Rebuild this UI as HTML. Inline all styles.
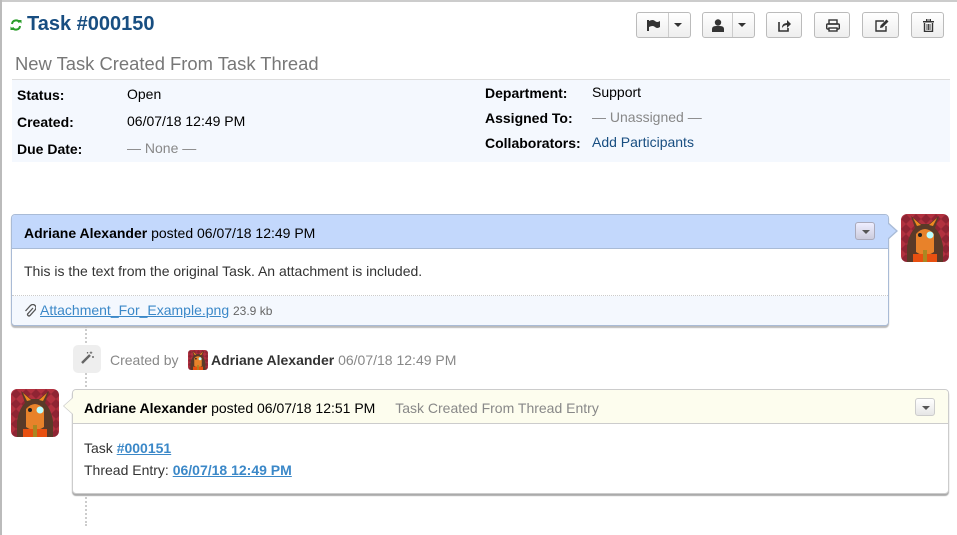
<!DOCTYPE html>
<html><head><meta charset="utf-8"><style>
*{box-sizing:border-box;margin:0;padding:0}
body{width:957px;height:535px;overflow:hidden;background:#fff;font-family:"Liberation Sans",Arial,sans-serif;font-size:14px;color:#000;position:relative}
.a{position:absolute}
.lbl{font-weight:bold;font-size:14px}
.btn{position:absolute;top:12px;height:26px;border:1px solid #bbb;border-radius:3px;background:linear-gradient(#fff,#eee);}
.btn svg{position:absolute}
.av{position:absolute;width:48px;height:48px;border-radius:6px;overflow:hidden}
.dd{position:absolute;width:20px;height:18px;border:1px solid #aab;border-radius:3px;background:linear-gradient(#eef,#ccd)}
.dd:after{content:"";position:absolute;left:6px;top:7px;border-left:4px solid transparent;border-right:4px solid transparent;border-top:4px solid #555}
a{color:#3b88c8;text-decoration:underline}
</style></head><body>
<div class="a" style="left:0;top:0;width:957px;height:2px;background:#ccc"></div>
<div class="a" style="left:0;top:0;width:2px;height:535px;background:#bbb"></div>

<svg class="a" style="left:10px;top:19px" width="12" height="12" viewBox="0 0 12 12"><path d="M2 5A4 4 0 0 1 9.5 3.5" stroke="#2a9d2a" stroke-width="2" fill="none"/><path d="M8 1h3.5v3.5z" fill="#2a9d2a"/><path d="M10 7A4 4 0 0 1 2.5 8.5" stroke="#2a9d2a" stroke-width="2" fill="none"/><path d="M4 11H.5V7.5z" fill="#2a9d2a"/></svg>
<div class="a" style="left:27px;top:13px;font-size:20px;font-weight:bold;color:#184e81">Task #000150</div>
<div class="a" style="left:15px;top:53px;font-size:18.4px;color:#777">New Task Created From Task Thread</div>

<div class="btn" style="left:636px;width:55px"><svg style="left:10px;top:7px" width="14" height="11"><rect x="0" y="0" width="2" height="11" fill="#333"/><path d="M2 1Q6 -1 8 1T13 1V7Q10 9 8 7T2 7Z" fill="#333"/></svg><div class="a" style="left:31px;top:0;width:1px;height:24px;background:#ccc"></div><div class="a" style="left:37px;top:10px;border-left:4px solid transparent;border-right:4px solid transparent;border-top:4px solid #333"></div></div>
<div class="btn" style="left:702px;width:53px"><svg style="left:9px;top:6px" width="12" height="13"><circle cx="6" cy="3.5" r="3.2" fill="#333"/><path d="M0 13V10Q0 7 4 7H8Q12 7 12 10V13Z" fill="#333"/></svg><div class="a" style="left:29px;top:0;width:1px;height:24px;background:#ccc"></div><div class="a" style="left:35px;top:10px;border-left:4px solid transparent;border-right:4px solid transparent;border-top:4px solid #333"></div></div>
<div class="btn" style="left:766px;width:36px"><svg style="left:11px;top:6px" width="14" height="13"><path d="M1 3V12H10V9" stroke="#333" stroke-width="1.6" fill="none"/><path d="M4 9Q4 4 9 4V1L13 5L9 9V6Q6 6 4 9Z" fill="#333"/></svg></div>
<div class="btn" style="left:814px;width:36px"><svg style="left:11px;top:6px" width="14" height="13"><rect x="3" y="1" width="8" height="4" fill="none" stroke="#333" stroke-width="1.4"/><rect x="0.7" y="5" width="12.6" height="5" rx="1" fill="none" stroke="#333" stroke-width="1.4"/><rect x="3" y="9" width="8" height="3" fill="#fff" stroke="#333" stroke-width="1.4"/></svg></div>
<div class="btn" style="left:862px;width:37px"><svg style="left:12px;top:6px" width="14" height="13"><path d="M9 2H1V12H11V7" stroke="#333" stroke-width="1.4" fill="none"/><path d="M5 9L5.5 6.5L11.5 0.5L13.5 2.5L7.5 8.5Z" fill="#333"/></svg></div>
<div class="btn" style="left:911px;width:33px"><svg style="left:11px;top:6px" width="11" height="13"><rect x="0" y="2" width="11" height="1.5" fill="#333"/><rect x="3.5" y="0" width="4" height="2" fill="none" stroke="#333"/><path d="M1.5 4V12.5H9.5V4" stroke="#333" stroke-width="1.4" fill="none"/><path d="M4 5V11M5.5 5V11M7 5V11" stroke="#333" stroke-width=".9"/></svg></div>

<div class="a" style="left:12px;top:79px;width:938px;height:83px;background:#f4f8fe;border-top:1px solid #ddd"></div>
<div class="a lbl" style="left:17px;top:87px">Status:</div><div class="a" style="left:127px;top:86px">Open</div>
<div class="a lbl" style="left:17px;top:114px">Created:</div><div class="a" style="left:127px;top:113px">06/07/18 12:49 PM</div>
<div class="a lbl" style="left:17px;top:141px">Due Date:</div><div class="a" style="left:127px;top:140px;color:#888">— None —</div>
<div class="a lbl" style="left:485px;top:85px">Department:</div><div class="a" style="left:592px;top:84px">Support</div>
<div class="a lbl" style="left:485px;top:110px">Assigned To:</div><div class="a" style="left:592px;top:109px;color:#888">— Unassigned —</div>
<div class="a lbl" style="left:485px;top:135px">Collaborators:</div><div class="a" style="left:592px;top:134px;color:#184e81">Add Participants</div>

<div class="a" style="left:85px;top:326px;width:0;height:200px;border-left:2px dotted #ccc"></div>

<div class="a" style="left:11px;top:214px;width:878px;height:112px;border:1px solid #a9bbd6;border-radius:4px;box-shadow:0 2px 1px #bbb;background:#fff;overflow:hidden">
 <div style="height:34px;background:#c3d8fc;border-bottom:1px solid #a9bbd6;padding:10px 0 0 12px"><b>Adriane Alexander</b> posted 06/07/18 12:49 PM</div>
 <div style="padding:14px 0 0 12px;height:47px;border-bottom:1px dotted #ccc;color:#333">This is the text from the original Task. An attachment is included.</div>
 <div style="height:30px;background:#f4f8fe;padding:6px 0 0 12px;font-size:14px;position:relative"><svg style="position:absolute;left:12px;top:8px" width="12" height="13" viewBox="0 0 12 13"><path d="M9 4L4 9.5Q3 10.5 4 11.5Q5 12.5 6 11.5L11 6Q13 3.5 11 1.5Q9 -0.5 6.5 1.5L1.5 7" stroke="#555" stroke-width="1.3" fill="none"/></svg><a style="margin-left:16px">Attachment_For_Example.png</a> <span style="font-size:12px;color:#666">23.9 kb</span></div>
</div>
<div class="a" style="left:888px;top:222px;width:0;height:0;border-top:9px solid transparent;border-bottom:9px solid transparent;border-left:10px solid #a9bbd6"></div>
<div class="a" style="left:887px;top:223px;width:0;height:0;border-top:8px solid transparent;border-bottom:8px solid transparent;border-left:9px solid #c3d8fc"></div>
<div class="dd" style="left:855px;top:222px"></div>

<svg width="0" height="0" style="position:absolute"><defs><pattern id="p" width="10" height="10" patternUnits="userSpaceOnUse"><rect width="10" height="10" fill="#b2313f"/><path d="M5 0L10 5L5 10L0 5Z" fill="#8f2433"/></pattern>
<g id="av"><rect width="48" height="48" fill="url(#p)"/><path d="M6 48V32Q8 20 14 14L10 2L20 10H28L38 2L34 14Q40 20 42 32V48Z" fill="#5a3a28"/><path d="M16 12L12 4L20 11ZM32 12L36 4L28 11Z" fill="#f08a20"/><path d="M15 20Q24 10 33 20V38Q24 44 15 38Z" fill="#e8822a"/><circle cx="29" cy="21" r="3.5" fill="#bff"/><circle cx="19" cy="21" r="2" fill="#222"/><path d="M12 40H36V48H12Z" fill="#e85010"/><path d="M22 36H26V48H22Z" fill="#a82"/></g></defs></svg>
<svg class="av" style="left:901px;top:214px" viewBox="0 0 48 48"><use href="#av"/></svg>

<div class="a" style="left:73px;top:345px;width:28px;height:28px;border-radius:5px;background:#eee"></div>
<svg class="a" style="left:80px;top:351px" width="14" height="14"><path d="M2 12L10 4" stroke="#666" stroke-width="2.5"/><path d="M11 0.5V3M9.7 1.7H12.3M13 5V7M12 6H14M7.5 1V2.5M6.8 1.8H8.3" stroke="#666" stroke-width=".9"/></svg>
<div class="a" style="left:110px;top:352px;color:#888">Created by</div>
<svg class="a" style="left:188px;top:350px;border-radius:3px" width="20" height="20" viewBox="0 0 48 48"><use href="#av"/></svg>
<div class="a" style="left:211px;top:352px;color:#888"><b style="color:#333">Adriane Alexander</b> 06/07/18 12:49 PM</div>

<svg class="av" style="left:11px;top:389px" viewBox="0 0 48 48"><use href="#av"/></svg>
<div class="a" style="left:72px;top:389px;width:877px;height:105px;border:1px solid #ccc;border-radius:4px;box-shadow:0 2px 1px #aaa;background:#fff;overflow:hidden">
 <div style="height:34px;background:#fdfdee;border-bottom:1px solid #ccc;padding:10px 0 0 11px"><b>Adriane Alexander</b> posted 06/07/18 12:51 PM <span style="color:#888;margin-left:16px">Task Created From Thread Entry</span></div>
 <div style="padding:13px 0 0 11px;color:#333;line-height:22px">Task <a style="font-weight:bold">#000151</a><br>Thread Entry: <a style="font-weight:bold">06/07/18 12:49 PM</a></div>
</div>
<div class="a" style="left:63px;top:397px;width:0;height:0;border-top:9px solid transparent;border-bottom:9px solid transparent;border-right:10px solid #ccc"></div>
<div class="a" style="left:64px;top:398px;width:0;height:0;border-top:8px solid transparent;border-bottom:8px solid transparent;border-right:9px solid #fdfdee"></div>
<div class="dd" style="left:915px;top:398px;border-color:#ccc;background:linear-gradient(#fff,#e6e6e6)"></div>
</body></html>
